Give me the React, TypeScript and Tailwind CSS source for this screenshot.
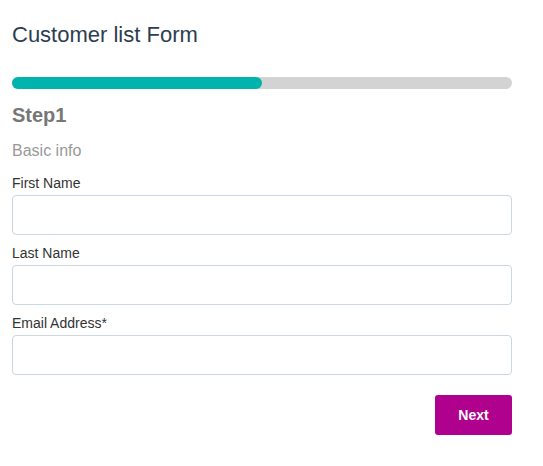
import React from "react";

const fields = [
  { label: "First Name", type: "text" },
  { label: "Last Name", type: "text" },
  { label: "Email Address*", type: "email" },
];

export default function App() {
  const progress = 50;
  return (
    <div className="w-[543px] h-[466px] bg-white px-3 pt-[22px]" style={{ fontFamily: "'Liberation Sans', Arial, sans-serif" }}>
      <div className="w-[500px]">
        <h1 className="text-[22px] leading-[26px] text-[#2c3e50]">Customer list Form</h1>
        <div className="mt-[29px] h-3 w-full rounded-full bg-[#d3d3d3]">
          <div className="h-3 rounded-full bg-[#00b3ad]" style={{ width: `${progress}%` }} />
        </div>
        <h2 className="mt-[15px] text-[20px] leading-[22px] font-bold text-[#777777]">Step1</h2>
        <p className="mt-[15px] text-[16px] leading-[20px] text-[#999999]">Basic info</p>
        <form className="mt-[12px] flex flex-col">
          {fields.map((f) => (
            <div key={f.label} className="mb-[8px] flex flex-col">
              <label className="text-[14px] leading-[20px] text-[#333333]">{f.label}</label>
              <input
                type={f.type}
                className="mt-[2px] h-[40px] w-full rounded-[4px] border border-[#ccd6df] px-3 text-[14px] outline-none"
              />
            </div>
          ))}
          <div className="mt-[12px] flex justify-end">
            <button type="button" className="h-[40px] w-[77px] rounded-[3px] bg-[#b0008e] text-[14px] font-bold text-white">
              Next
            </button>
          </div>
        </form>
      </div>
    </div>
  );
}
